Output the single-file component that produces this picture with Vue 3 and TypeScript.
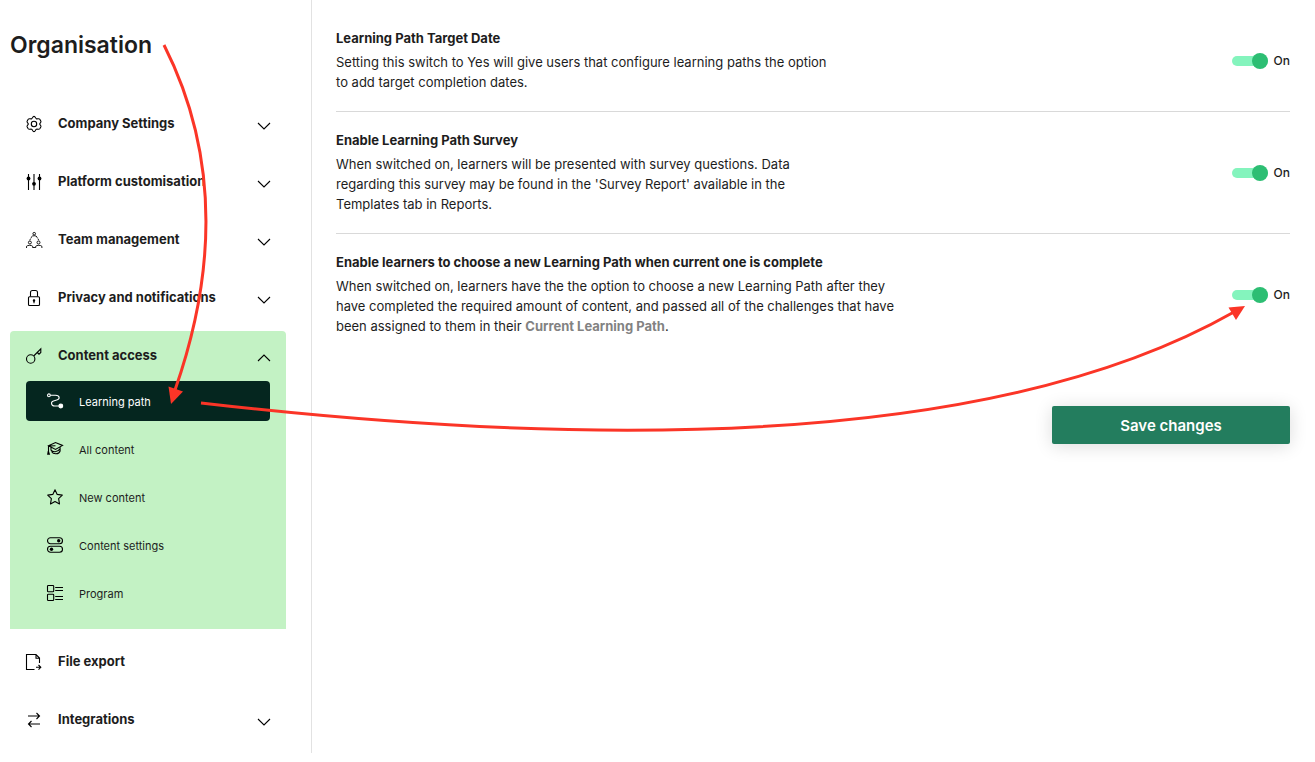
<script setup lang="ts">
import { reactive, ref } from 'vue'

interface SubItem { label: string; icon: string }
interface NavItem { label: string; icon: string; expandable: boolean; children?: SubItem[] }
interface Setting { id: string; title: string; text: string; link?: string; wide?: boolean; on: boolean }

const nav: NavItem[] = [
  { label: 'Company Settings', icon: 'gear', expandable: true },
  { label: 'Platform customisation', icon: 'sliders', expandable: true },
  { label: 'Team management', icon: 'team', expandable: true },
  { label: 'Privacy and notifications', icon: 'lock', expandable: true },
  {
    label: 'Content access',
    icon: 'key',
    expandable: true,
    children: [
      { label: 'Learning path', icon: 'path' },
      { label: 'All content', icon: 'cap' },
      { label: 'New content', icon: 'star' },
      { label: 'Content settings', icon: 'toggles' },
      { label: 'Program', icon: 'program' },
    ],
  },
  { label: 'File export', icon: 'file', expandable: false },
  { label: 'Integrations', icon: 'swap', expandable: true },
]

const icons: Record<string, string> = {
  gear: '<path d="M8 .4c1.500 0 1.300 1.800 2.300 2.300 1 .6 2.700-.6 3.500.6l1.100 1.900c.6 1.200-1.200 1.700-1.200 2.800s1.800 1.600 1.200 2.800l-1.100 1.900c-.8 1.200-2.500 0-3.500.6-1 .5-.8 2.300-2.300 2.300s-1.300-1.800-2.300-2.300c-1-.6-2.700.6-3.500-.6l-1.100-1.900C.5 9.600 2.300 9.100 2.300 8S.5 6.400 1.100 5.200l1.100-1.900c.8-1.200 2.500 0 3.500-.6 1-.5.8-2.300 2.300-2.300z"/><circle cx="8" cy="8" r="2.700"/>',
  sliders: '<path d="M2.500 0v16M8 0v16M13.500 0v16"/><g fill="currentColor" stroke="none"><circle cx="2.500" cy="4.500" r="1.900"/><circle cx="8" cy="9.800" r="1.900"/><circle cx="13.500" cy="4.500" r="1.900"/></g>',
  team: '<g stroke-width=".9"><circle cx="8.200" cy="1.700" r="1.300"/><path d="M5.300 5.800V5c.6-1.700 5.200-1.700 5.800 0v.8M4.700 6.500 3.700 8.300M11.800 6.500l1 1.800"/><circle cx="3.900" cy="10.500" r="1.500"/><circle cx="12.500" cy="10.500" r="1.500"/><path d="M.5 16v-1.700c1.100-1.300 5.100-1.300 6.200 0v1.400M9.700 15.700v-1.400c1.100-1.300 5.100-1.300 6.200 0V16M6.700 15.500h3"/></g>',
  lock: '<rect x="2.500" y="6.700" width="11" height="8.800" rx="1"/><path d="M4.500 6.500V2.500c0-1.300.7-2 2-2h3c1.300 0 2 .7 2 2v4M8 10.300v3"/><circle cx="8" cy="10.500" r=".7" fill="currentColor"/>',
  key: '<circle cx="4.700" cy="11" r="4.200"/><path d="M7.700 8 14.800.8v3.700l-1.800 1.700-1.600-1.700"/>',
  path: '<circle cx="1.900" cy="2.300" r="1.400"/><path d="M3.300 2.300h5.200c4.800 0 4.400 4 1.300 4.700L6.500 8c-3 1-2.500 5 1.200 5H12"/><circle cx="13.800" cy="13" r="1.900" fill="currentColor"/>',
  cap: '<path d="M1.500 4.800 8.500 1.500l7 2.900-7 4zM1.500 4.800v8M4 6.500v2.600c1.800 2.300 6.500 2.300 9.100-1.200V5.900M4.500 10.500c2 3.300 7.500 3 8.600-.5V8M1.500 5l7-.3M1.300 10l-.6 3.300h1.700z"/>',
  star: '<path d="m8 .8 2.200 4.600 5.100.7-3.700 3.500.9 5.300L8 12.500l-4.500 2.400.9-5.300L.7 6.100l5.100-.7z" stroke-linejoin="round"/>',
  toggles: '<rect x=".5" y=".8" width="15" height="5.900" rx="2.950"/><rect x=".5" y="9.300" width="15" height="5.900" rx="2.950"/><g fill="currentColor" stroke="none"><circle cx="11.700" cy="3.750" r="1.700"/><circle cx="4.500" cy="12.250" r="1.700"/></g>',
  program: '<rect x=".5" y=".5" width="6.200" height="6.200" rx=".8"/><rect x=".5" y="9.300" width="6.200" height="6.200" rx=".8"/><path d="M8.200 2.500H16M8.200 5.500H16M8.200 11.500H16M8.200 14.500H16"/>',
  file: '<path d="M8.500 15.500h-8V.5h9.500l3.500 3.500v5M10 .8v3.400h3.500"/><path d="M10 13.300h4.700M12.500 11l2.300 2.300-2.300 2.300"/>',
  swap: '<path d="M2 4h11.500M10.500 1l3 3-3 3M14 12H2.500M5.500 9l-3 3 3 3"/>',
}

const settings = reactive<Setting[]>([
  {
    id: 'target-date',
    title: 'Learning Path Target Date',
    text: 'Setting this switch to Yes will give users that configure learning paths the option to add target completion dates.',
    on: true,
  },
  {
    id: 'survey',
    title: 'Enable Learning Path Survey',
    text: "When switched on, learners will be presented with survey questions. Data regarding this survey may be found in the 'Survey Report' available in the Templates tab in Reports.",
    on: true,
  },
  {
    id: 'choose-path',
    title: 'Enable learners to choose a new Learning Path when current one is complete',
    text: 'When switched on, learners have the the option to choose a new Learning Path after they have completed the required amount of content, and passed all of the challenges that have been assigned to them in their ',
    link: 'Current Learning Path',
    wide: true,
    on: true,
  },
])

const open = ref('Content access')
const active = ref('Learning path')
const toggle = (item: NavItem) => {
  if (item.expandable) open.value = open.value === item.label ? '' : item.label
}
</script>

<template>
  <div class="page">
    <aside class="sidebar">
      <h1>Organisation</h1>
      <nav>
        <section v-for="item in nav" :key="item.label" class="group" :class="{ open: open === item.label }">
          <button type="button" class="group-head" @click="toggle(item)">
            <svg class="icon" viewBox="0 0 16 16" v-html="icons[item.icon]"></svg>
            <span class="group-label">{{ item.label }}</span>
            <svg v-if="item.expandable" class="chevron" viewBox="0 0 12 8"><path d="m0 1 6 6 6-6" /></svg>
          </button>
          <div v-if="item.children && open === item.label" class="children">
            <a
              v-for="child in item.children"
              :key="child.label"
              href="#"
              class="child"
              :class="{ active: active === child.label }"
              @click.prevent="active = child.label"
            >
              <svg class="icon" viewBox="0 0 16 16" v-html="icons[child.icon]"></svg>
              <span class="child-label">{{ child.label }}</span>
            </a>
          </div>
        </section>
      </nav>
    </aside>

    <main>
      <section v-for="s in settings" :key="s.id" class="setting">
        <div class="copy" :class="{ wide: s.wide }">
          <h2>{{ s.title }}</h2>
          <p>{{ s.text }}<template v-if="s.link"><a href="#">{{ s.link }}</a>.</template></p>
        </div>
        <label class="switch">
          <input v-model="s.on" type="checkbox" role="switch" />
          <span>{{ s.on ? 'On' : 'Off' }}</span>
        </label>
      </section>
      <button type="button" class="save">Save changes</button>
    </main>

    <svg class="arrows" width="1315" height="762" viewBox="0 0 1315 762" aria-hidden="true">
      <path class="line" d="M164 45Q242 199 175 390" />
      <path class="tip" d="M171 404 168.500 386.500 183 391.500z" />
      <path class="line" d="M201 403Q926 487 1234 312" />
      <path class="tip" d="M1245 306 1228.500 307.500 1236 320z" />
    </svg>
  </div>
</template>

<style>
body {
  margin: 0;
  background: #fff;
}
</style>

<style scoped>
.page {
  position: relative;
  display: flex;
  align-items: flex-start;
  overflow: hidden;
  min-height: 100vh;
  color: #1d1d1d;
  font-family: Inter, "Liberation Sans", sans-serif;
  font-size: 13px;
  line-height: 20px;
}
.sidebar {
  box-sizing: border-box;
  flex: 0 0 312px;
  padding: 29px 25px 8px 10px;
  border-right: 1px solid #e2e2e2;
}
h1 {
  margin: 0 0 38px;
  font-size: 23px;
  font-weight: 600;
  line-height: 32px;
}
nav {
  display: flex;
  flex-direction: column;
  gap: 8px;
}
button {
  border: 0;
  background: none;
  color: inherit;
  font: inherit;
  cursor: pointer;
}
.group.open {
  border-radius: 4px 4px 0 0;
  background: #c3f2c4;
}
.group-head {
  display: flex;
  align-items: center;
  gap: 16px;
  width: 100%;
  height: 50px;
  padding: 0 16px;
  text-align: left;
  font-weight: 700;
}
.group-label {
  flex: 1;
  padding-bottom: 2px;
}
.icon {
  flex: none;
  width: 16px;
  height: 16px;
  overflow: visible;
  fill: none;
  stroke: currentColor;
  stroke-width: 1.1;
}
.group .icon {
  color: #000;
}
.chevron {
  width: 12px;
  height: 8px;
  margin-top: 4px;
  overflow: visible;
  fill: none;
  stroke: #000;
  stroke-width: 1.1;
}
.open .chevron {
  transform: rotate(180deg);
}
.children {
  display: flex;
  flex-direction: column;
  gap: 8px;
  padding: 0 16px 16px;
}
.child {
  display: flex;
  align-items: center;
  gap: 16px;
  height: 40px;
  padding: 0 21px;
  border-radius: 4px;
  color: inherit;
  font-size: 11px;
  text-decoration: none;
}
.child-label {
  padding-top: 2px;
}
.child.active {
  background: #05261f;
  color: #fff;
}
.group .child.active .icon {
  color: #fff;
}
main {
  flex: 1;
  display: flex;
  flex-direction: column;
  padding: 10px 25px 24px 24px;
}
.setting {
  display: flex;
  align-items: center;
  justify-content: space-between;
  gap: 24px;
}
.setting + .setting {
  border-top: 1px solid #d9d9d9;
}
.copy {
  max-width: 500px;
  padding: 16px 0 19px;
}
.copy.wide {
  max-width: 566px;
}
h2 {
  margin: 0 0 2px;
  font-size: 13px;
  font-weight: 700;
  line-height: 24px;
}
p {
  margin: 0;
}
p a {
  color: #828282;
  font-weight: 700;
  text-decoration: none;
}
.switch {
  display: flex;
  align-items: center;
  gap: 6px;
  font-size: 12px;
  font-weight: 500;
}
.switch input {
  appearance: none;
  display: flex;
  align-items: center;
  width: 36px;
  height: 10px;
  margin: 0;
  border-radius: 5px;
  background: #ccc;
  cursor: pointer;
}
.switch input::before {
  content: "";
  width: 16px;
  height: 16px;
  border-radius: 50%;
  background: #888;
}
.switch input:checked {
  justify-content: flex-end;
  background: #84f4bd;
}
.switch input:checked::before {
  background: #2dbe73;
}
.save {
  align-self: flex-end;
  width: 238px;
  height: 38px;
  margin-top: 51px;
  padding: 2px 0 0;
  border-radius: 2px;
  background: #237d5e;
  box-shadow: 0 2px 18px rgba(0, 0, 0, 0.14);
  color: #fff;
  font-size: 15px;
  font-weight: 600;
}
.arrows {
  position: absolute;
  top: 0;
  left: 0;
  pointer-events: none;
}
.line {
  fill: none;
  stroke: #fb3527;
  stroke-width: 3;
}
.tip {
  fill: #fb3527;
}
</style>
